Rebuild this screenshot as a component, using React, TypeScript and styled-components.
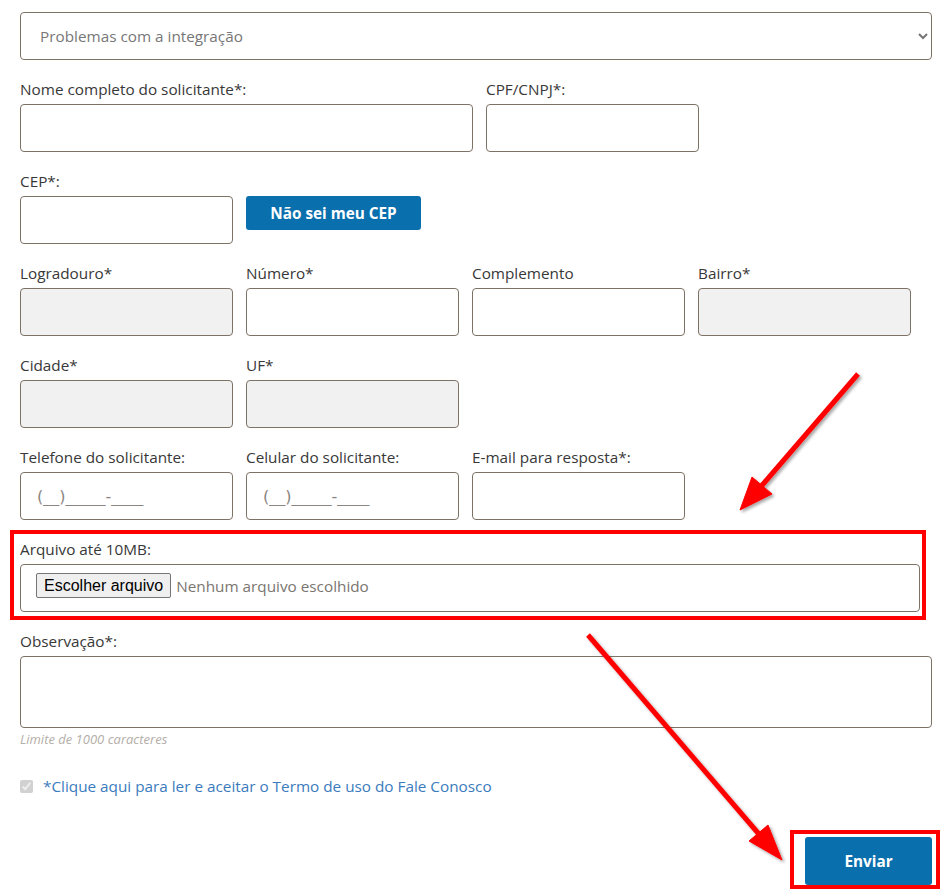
import React from "react";
import styled, { createGlobalStyle } from "styled-components";

const GlobalStyle = createGlobalStyle`
	* {
		box-sizing: border-box;
	}

	body {
		margin: 0;
		background: #ffffff;
		font-family: "Open Sans", "Noto Sans", sans-serif;
		color: #383838;
	}
`;

const rows = [
	[
		{ label: "Logradouro*", disabled: true },
		{ label: "Número*" },
		{ label: "Complemento" },
		{ label: "Bairro*", disabled: true },
	],
	[
		{ label: "Cidade*", disabled: true },
		{ label: "UF*", disabled: true },
	],
	[
		{ label: "Telefone do solicitante:", placeholder: "(__)_____-____" },
		{ label: "Celular do solicitante:", placeholder: "(__)_____-____" },
		{ label: "E-mail para resposta*:" },
	],
];

export default function App() {
	return (
		<>
			<GlobalStyle />
			<Page>
				<Select defaultValue="integracao">
					<option value="integracao">Problemas com a integração</option>
				</Select>

				<Row $columns="453px 213px">
					<Field>
						<Label>Nome completo do solicitante*:</Label>
						<Input />
					</Field>
					<Field>
						<Label>CPF/CNPJ*:</Label>
						<Input />
					</Field>
				</Row>

				<Row>
					<Field>
						<Label>CEP*:</Label>
						<Input />
					</Field>
					<ButtonCell>
						<BlueButton $width={175} $height={34}>
							Não sei meu CEP
						</BlueButton>
					</ButtonCell>
				</Row>

				{rows.map((row, i) => (
					<Row key={i}>
						{row.map((field) => (
							<Field key={field.label}>
								<Label>{field.label}</Label>
								<Input
									disabled={field.disabled}
									placeholder={field.placeholder}
								/>
							</Field>
						))}
					</Row>
				))}

				<Highlight>
					<Label>Arquivo até 10MB:</Label>
					<FileBox>
						<FileButton>Escolher arquivo</FileButton>
						<FileName>Nenhum arquivo escolhido</FileName>
					</FileBox>
				</Highlight>

				<NotesSection>
					<Label>Observação*:</Label>
					<TextArea />
					<Hint>Limite de 1000 caracteres</Hint>
				</NotesSection>

				<TermsRow>
					<input type="checkbox" checked disabled readOnly />
					<TermsLink href="#">
						*Clique aqui para ler e aceitar o Termo de uso do Fale Conosco
					</TermsLink>
				</TermsRow>

				<SubmitRow>
					<SubmitHighlight>
						<BlueButton $width={127} $height={48}>
							Enviar
						</BlueButton>
					</SubmitHighlight>
				</SubmitRow>

				<Arrows viewBox="0 0 943 891">
					<defs>
						<filter id="shadow" x="-20%" y="-20%" width="140%" height="140%">
							<feDropShadow
								dx="2"
								dy="2"
								stdDeviation="1.5"
								floodColor="#000"
								floodOpacity="0.35"
							/>
						</filter>
					</defs>
					<g filter="url(#shadow)" fill="#ff0000" stroke="#ff0000">
						<line x1="858" y1="374" x2="758" y2="490" strokeWidth="5" />
						<polygon points="740,510 752,477 772,494" strokeWidth="1" />
						<line x1="588" y1="635" x2="764" y2="840" strokeWidth="5" />
						<polygon points="782,860 749,841 768,825" strokeWidth="1" />
					</g>
				</Arrows>
			</Page>
		</>
	);
}

const Page = styled.main`
	position: relative;
	width: 943px;
	height: 891px;
	overflow: hidden;
	padding: 12px 11px 0 20px;
`;

const Select = styled.select`
	display: block;
	width: 100%;
	height: 48px;
	padding: 0 14px 0 15px;
	border: 1px solid #7d7266;
	border-radius: 4px;
	background: #ffffff;
	color: #777777;
	font-family: "Open Sans", "Noto Sans", sans-serif;
	font-size: 15.3px;
`;

const Row = styled.div<{ $columns?: string }>`
	display: grid;
	grid-template-columns: ${(p) => p.$columns ?? "repeat(4, 213px)"};
	column-gap: 13px;
	margin-top: 20px;
`;

const Field = styled.div`
	display: flex;
	flex-direction: column;
`;

const ButtonCell = styled.div`
	padding-top: 24px;
`;

const Label = styled.label`
	display: block;
	height: 18px;
	margin-bottom: 6px;
	font-size: 15.3px;
	line-height: 18px;
	color: #383838;
	white-space: nowrap;
`;

const Input = styled.input`
	width: 100%;
	height: 48px;
	padding: 0 16px;
	border: 1px solid #7d7266;
	border-radius: 4px;
	background: #ffffff;
	font-family: "Open Sans", "Noto Sans", sans-serif;
	font-size: 15px;
	color: #383838;

	&:disabled {
		background: #f0f1f0;
	}

	&::placeholder {
		color: #8a8580;
		font-family: "DejaVu Sans", sans-serif;
		font-size: 16px;
	}
`;

const BlueButton = styled.button<{ $width: number; $height: number }>`
	width: ${(p) => p.$width}px;
	height: ${(p) => p.$height}px;
	border: none;
	border-radius: 3px;
	background: #0a6fad;
	color: #ffffff;
	font-family: "Open Sans", "Noto Sans", sans-serif;
	font-size: 15.3px;
	font-weight: 700;
	cursor: pointer;
`;

const Highlight = styled.div`
	margin: 10px 6px 0 -10px;
	padding: 6px 2px 4px 6px;
	border: 4px solid #ff0000;
`;

const FileBox = styled.div`
	display: flex;
	align-items: center;
	height: 48px;
	padding: 0 15px 5px;
	border: 1px solid #7d7266;
	border-radius: 4px;
`;

const FileButton = styled.span`
	display: inline-flex;
	align-items: center;
	height: 25px;
	padding: 0 7px;
	border: 1px solid #767676;
	border-radius: 2px;
	background: #efefef;
	color: #000000;
	font-family: "Liberation Sans", Arial, sans-serif;
	font-size: 16px;
`;

const FileName = styled.span`
	margin-left: 5px;
	color: #7a7570;
	font-size: 15.3px;
`;

const NotesSection = styled.div`
	margin-top: 12px;
`;

const TextArea = styled.textarea`
	display: block;
	width: 100%;
	height: 72px;
	border: 1px solid #7d7266;
	border-radius: 4px;
	resize: none;
`;

const Hint = styled.p`
	margin: 3px 0 0;
	font-size: 13px;
	line-height: 16px;
	font-style: italic;
	color: #b4aea8;
`;

const TermsRow = styled.div`
	display: flex;
	align-items: center;
	gap: 10px;
	margin-top: 29px;
	height: 20px;

	input {
		width: 13px;
		height: 13px;
		margin: 0;
	}
`;

const TermsLink = styled.a`
	color: #3b7bbd;
	font-size: 15.3px;
	text-decoration: none;
`;

const SubmitRow = styled.div`
	display: flex;
	justify-content: flex-end;
	margin-top: 34px;
	margin-right: -8px;
`;

const SubmitHighlight = styled.div`
	padding: 3px 4px 0 11px;
	border: 4px solid #ff0000;
`;

const Arrows = styled.svg`
	position: absolute;
	top: 0;
	left: 0;
	width: 943px;
	height: 891px;
	pointer-events: none;
`;
